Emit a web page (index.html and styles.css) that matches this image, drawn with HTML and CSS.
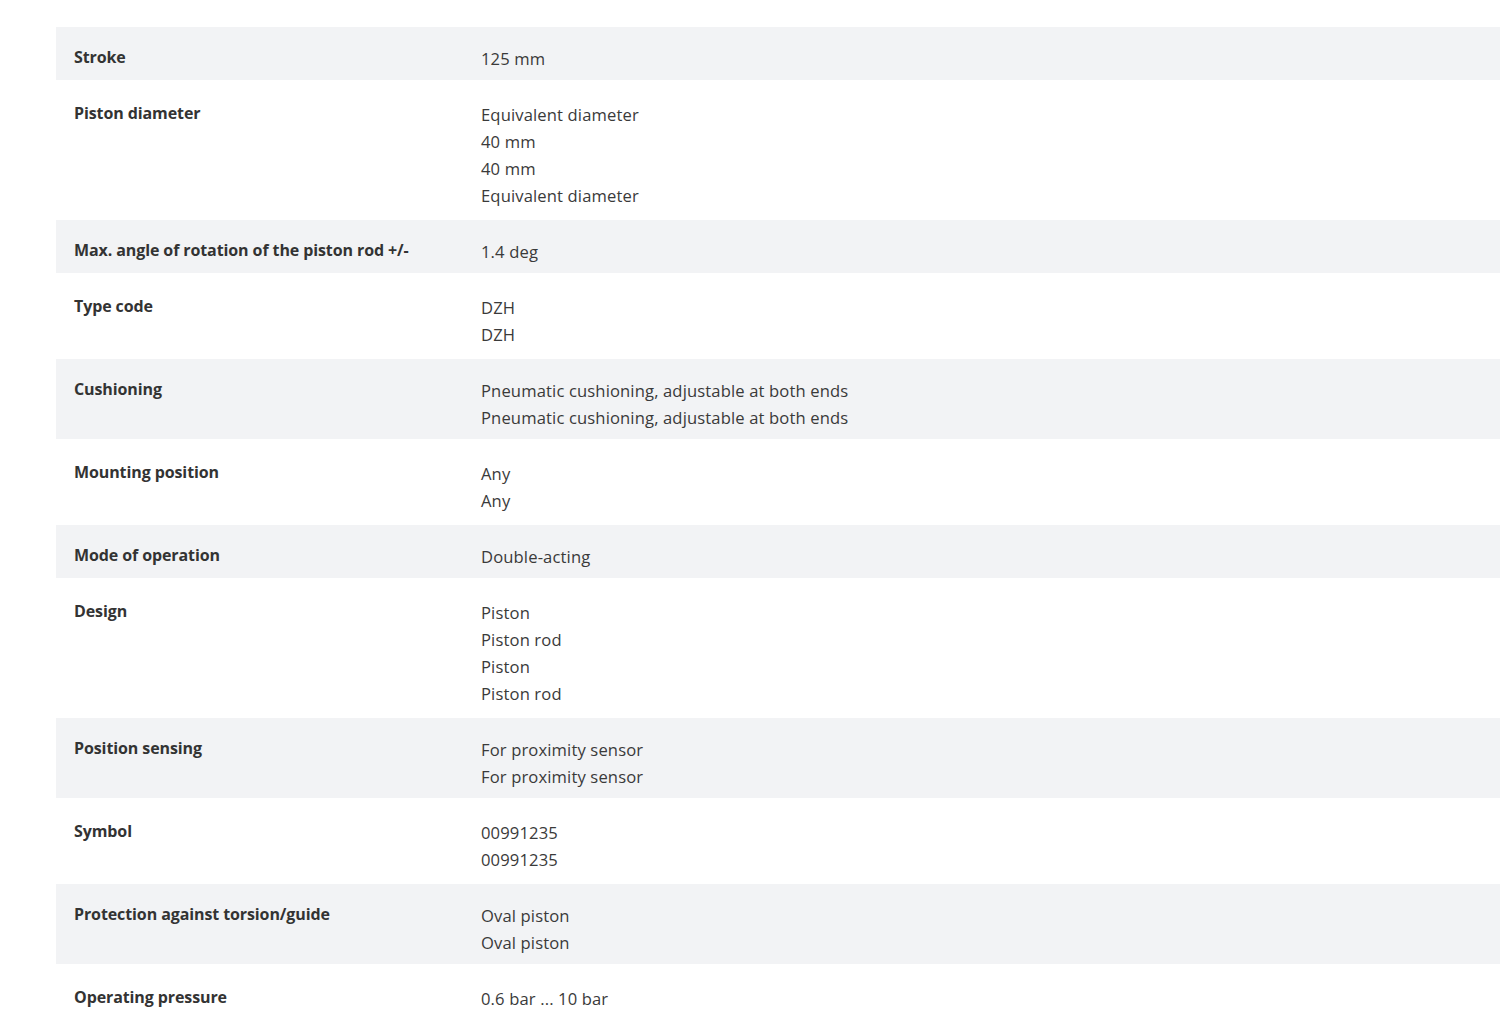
FILE: index.html
```html
<!DOCTYPE html>
<html lang="en">
<head>
<meta charset="utf-8">
<title>Technical data</title>
<link rel="stylesheet" href="styles.css">
</head>
<body>
<div class="page">
  <div class="specs">
    <div class="row gray"><div class="label">Stroke</div><div class="value"><div>125 mm</div></div></div>
    <div class="row white"><div class="label">Piston diameter</div><div class="value"><div>Equivalent diameter</div><div>40 mm</div><div>40 mm</div><div>Equivalent diameter</div></div></div>
    <div class="row gray"><div class="label">Max. angle of rotation of the piston rod +/-</div><div class="value"><div>1.4 deg</div></div></div>
    <div class="row white"><div class="label">Type code</div><div class="value"><div>DZH</div><div>DZH</div></div></div>
    <div class="row gray"><div class="label">Cushioning</div><div class="value"><div>Pneumatic cushioning, adjustable at both ends</div><div>Pneumatic cushioning, adjustable at both ends</div></div></div>
    <div class="row white"><div class="label">Mounting position</div><div class="value"><div>Any</div><div>Any</div></div></div>
    <div class="row gray"><div class="label">Mode of operation</div><div class="value"><div>Double-acting</div></div></div>
    <div class="row white"><div class="label">Design</div><div class="value"><div>Piston</div><div>Piston rod</div><div>Piston</div><div>Piston rod</div></div></div>
    <div class="row gray"><div class="label">Position sensing</div><div class="value"><div>For proximity sensor</div><div>For proximity sensor</div></div></div>
    <div class="row white"><div class="label">Symbol</div><div class="value"><div>00991235</div><div>00991235</div></div></div>
    <div class="row gray"><div class="label">Protection against torsion/guide</div><div class="value"><div>Oval piston</div><div>Oval piston</div></div></div>
    <div class="row white"><div class="label">Operating pressure</div><div class="value"><div>0.6 bar ... 10 bar</div></div></div>
  </div>
</div>
</body>
</html>
```
FILE: styles.css
```css
html, body {
  margin: 0;
  padding: 0;
  background: #ffffff;
}
body {
  font-family: "Open Sans", "Noto Sans", sans-serif;
  font-size: 16px;
  color: #333333;
}
.page {
  padding: 27px 0 0 56px;
}
.specs {
  display: flex;
  flex-direction: column;
}
.row {
  display: grid;
  grid-template-columns: 407px 1fr;
  line-height: 27px;
}
.row.gray {
  background: #f2f3f5;
  padding: 17px 0 8px 18px;
}
.row.white {
  background: #ffffff;
  padding: 20px 0 11px 18px;
}
.label {
  font-weight: 700;
  letter-spacing: -0.1px;
  color: #333333;
}
.value {
  color: #3a3a3a;
  font-size: 16.6px;
  letter-spacing: 0.13px;
  padding-top: 1px;
}
```
